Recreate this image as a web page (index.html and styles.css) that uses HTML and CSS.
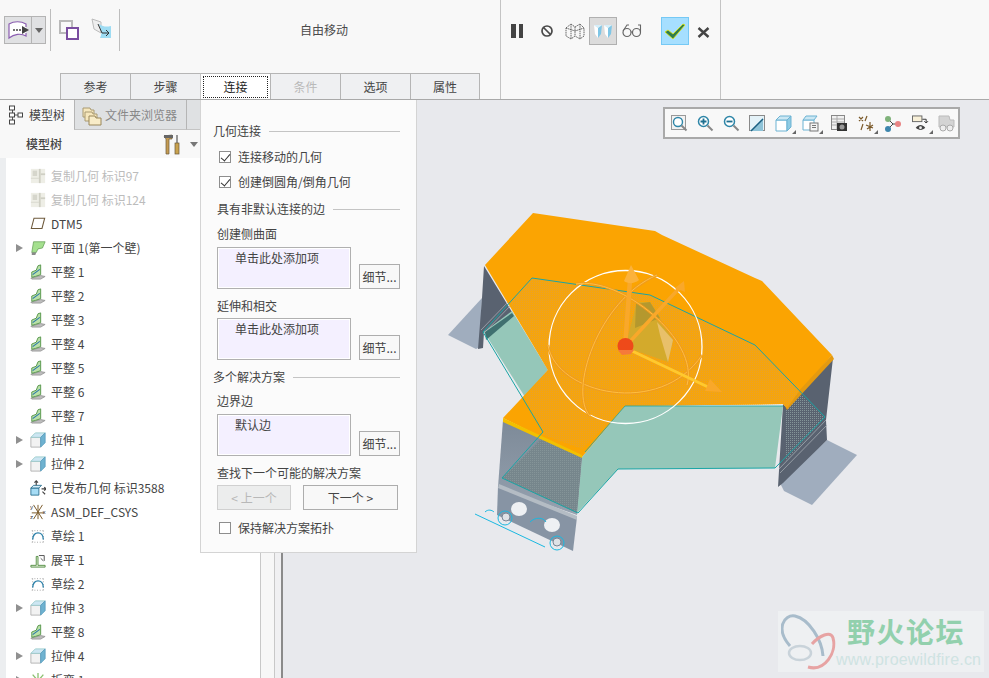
FILE: index.html
```html
<!DOCTYPE html>
<html lang="zh-CN">
<head>
<meta charset="utf-8">
<title>自由移动</title>
<link rel="stylesheet" href="styles.css">
</head>
<body>
<svg class="defs" width="0" height="0" aria-hidden="true">
  <defs>
    <symbol id="i-copy" viewBox="0 0 18 18"><rect x="1" y="1" width="16" height="16" fill="#eeeee6"/><rect x="3" y="3" width="5" height="6" fill="#d6d6cc"/><rect x="10" y="1" width="2" height="16" fill="#cfcfc4"/><rect x="12" y="6" width="5" height="2" fill="#cfcfc4"/><rect x="1" y="11" width="9" height="1" fill="#d6d6cc"/></symbol>
    <symbol id="i-plane" viewBox="0 0 18 18"><path d="M4.500 2.500H16.500L13.500 14H1.500Z" fill="#fff" stroke="#6e5a3c" stroke-width="1.200"/></symbol>
    <symbol id="i-wall" viewBox="0 0 18 18"><path d="M4 2H17L14 9 9 10 7 14H2Z" fill="#a5e08f" stroke="#5e9a50" stroke-width=".8"/><path d="M2 14H7L6 17H2Z" fill="#8a8a8a"/></symbol>
    <symbol id="i-flat" viewBox="0 0 18 18"><path d="M1 16 12 13 17 14 12 17H2Z" fill="#bdbdbd" stroke="#8a8a8a" stroke-width=".8"/><path d="M2 15V9L7 7 9 2 12 1V12L6 14Z" fill="#b9e0a8" stroke="#4f9044"/><path d="M3 12 11 6" stroke="#2a78a8" stroke-width="1.200"/></symbol>
    <symbol id="i-ext" viewBox="0 0 18 18"><path d="M1 6H12V17H1Z" fill="#f2f2f2" stroke="#b0b0b0"/><path d="M1 6 6 1H17L12 6Z" fill="#cde6f2" stroke="#9cc"/><path d="M12 6 17 1V12L12 17Z" fill="#6fb2d0" stroke="#5a9fc0"/></symbol>
    <symbol id="i-pub" viewBox="0 0 18 18"><path d="M1 9H10V17H1Z" fill="#a6dcf5" stroke="#2a6f8f"/><path d="M1 9 4 6H13L10 9Z" fill="#d7effa" stroke="#2a6f8f"/><path d="M7 6V1M5 3 7 1 9 3M13 10H18M16 8 18 10 16 12M14 13 17 16" fill="none" stroke="#444" stroke-width="1.300"/></symbol>
    <symbol id="i-csys" viewBox="0 0 18 18"><path d="M4 1 14 17M14 1 4 17M9 1V17M2 10H16" stroke="#7b5a2a" stroke-width="1.100" fill="none"/><text x="0" y="6" class="tiny">y</text><text x="0" y="17" class="tiny">z</text><text x="14" y="11" class="tiny">x</text></symbol>
    <symbol id="i-sk" viewBox="0 0 18 18"><path d="M2 3H16M2 16H16M3 3V16M15 3V16" stroke="#9a9a9a" stroke-dasharray="1 2" fill="none"/><path d="M3 13C3 3 15 3 15 13" stroke="#2a7fa8" stroke-width="1.600" fill="none"/></symbol>
    <symbol id="i-unf" viewBox="0 0 18 18"><path d="M1 15H7V5H9V15H17V17H1Z" fill="#e6f0dc" stroke="#4d8a3c"/><path d="M10 4 16 4V10M12 7 15 10" stroke="#444" fill="none"/></symbol>
    <symbol id="i-bend" viewBox="0 0 18 18"><path d="M9 10 3 3M9 10V1M9 10 15 3M1 9 17 9" stroke="#8cc070" stroke-width="1.500" fill="none"/></symbol>
  </defs>
</svg>

<header class="ribbon">
  <div class="group group-main">
    <div class="tools">
      <div class="split">
        <span class="split-main">
          <svg width="23" height="19" viewBox="0 0 23 19"><path d="M2 3C7 0 14 0 19 3V15C14 12 7 13 2 17Z" fill="#fff"/><path d="M19 6V3C14 0 7 0 2 3V17C7 13 14 12 19 15V12" fill="none" stroke="#8a5db0" stroke-width="1.200"/><path d="M6 9H16" stroke="#444" stroke-width="1.500" stroke-dasharray="2 1"/><path d="M15 5 22 9 15 13Z" fill="#444"/></svg>
        </span>
        <span class="split-arrow"></span>
      </div>
      <div class="sep"></div>
      <svg class="tool-a" width="21" height="21" viewBox="0 0 21 21"><rect x="1" y="1" width="12" height="12" fill="none" stroke="#b9b9b9" stroke-width="2"/><rect x="8" y="8" width="11" height="11" fill="#fff" stroke="#7a4da0" stroke-width="2"/></svg>
      <svg class="tool-b" width="21" height="21" viewBox="0 0 21 21"><path d="M1 1 10 4V15L3 11Z" fill="#eee" stroke="#bbb"/><path d="M8 6C13 9 15 9 20 8V20H9C12 14 9 10 8 6Z" fill="#9edcf3"/><path d="M7 6 11 15H18M15 12 18 15 15 18" fill="none" stroke="#333"/></svg>
      <div class="sep sep-b"></div>
      <div class="title">自由移动</div>
    </div>
    <nav class="tabs">
      <span class="tab">参考</span>
      <span class="tab">步骤</span>
      <span class="tab tab-on"><span class="focus">连接</span></span>
      <span class="tab tab-off">条件</span>
      <span class="tab">选项</span>
      <span class="tab">属性</span>
    </nav>
  </div>
  <div class="group group-act">
    <span class="act act-pause"><i></i><i></i></span>
    <span class="act"><svg width="14" height="14" viewBox="0 0 14 14"><circle cx="7" cy="7" r="5" fill="none" stroke="#4a4a4a" stroke-width="1.700"/><path d="M3.500 3.500 10.500 10.500" stroke="#4a4a4a" stroke-width="1.700"/></svg></span>
    <span class="act"><svg width="20" height="18" viewBox="0 0 20 18"><path d="M1 6 6 2 10 5 15 2 19 6V14L15 17 10 14 6 17 1 14ZM6 2V17M15 2V17M10 5V14M1 6 10 9 19 6" fill="none" stroke="#555" stroke-width=".9" stroke-dasharray="1.500 .7"/></svg></span>
    <span class="act act-sel"><svg width="20" height="16" viewBox="0 0 20 16"><path d="M1 2 5 5V15L2 11Z" fill="#fff"/><path d="M9 2 5 5V15L8 11Z" fill="#7fc6e6"/><path d="M1 2H9L5 5Z" fill="#d6effa"/><path d="M11 2 15 5V15L12 11Z" fill="#fff"/><path d="M19 2 15 5V15L18 11Z" fill="#7fc6e6"/><path d="M11 2H19L15 5Z" fill="#d6effa"/></svg></span>
    <span class="act"><svg width="20" height="14" viewBox="0 0 20 14"><circle cx="5" cy="8.500" r="4" fill="none" stroke="#666" stroke-width="1.200"/><circle cx="14.500" cy="8.500" r="4" fill="none" stroke="#666" stroke-width="1.200"/><path d="M9 8H10.500M1 7 5 1H7M18.500 8V1H16" fill="none" stroke="#666" stroke-width="1.100"/></svg></span>
    <span class="act act-ok"><svg width="22" height="17" viewBox="0 0 22 17"><path d="M1 9 4 7 9 11 19 1 21 2 9 16Z" fill="#2e7d4f" stroke="#e8e800" stroke-width=".8"/></svg></span>
    <span class="act act-x"><svg width="13" height="11" viewBox="0 0 13 11"><path d="M1.500 1 11.500 10M11.500 1 1.500 10" stroke="#444" stroke-width="2.400"/></svg></span>
  </div>
  <div class="group-rest"></div>
</header>

<main class="main">
  <aside class="side">
    <div class="side-tabs">
      <span class="stab stab-on">
        <svg width="18" height="20" viewBox="0 0 18 20"><path d="M4.500 5V16M4.500 10H10" stroke="#555"/><rect x="1.500" y="1" width="5" height="4" fill="#fff" stroke="#444"/><rect x="1.500" y="8" width="5" height="4" fill="#fff" stroke="#444"/><rect x="1.500" y="15" width="5" height="4" fill="#fff" stroke="#444"/><rect x="10" y="8" width="4.500" height="4" fill="#fff" stroke="#444"/></svg>
        模型树
      </span>
      <span class="stab">
        <svg width="20" height="20" viewBox="0 0 20 20"><path d="M1 2H8L9 4H12V11H1Z" fill="#f6e7bd" stroke="#a99a72"/><path d="M3 6H10L11 8H15V15H3Z" fill="#f6e7bd" stroke="#a99a72"/><path d="M7 10H13L14 12H19V19H7Z" fill="#f8ecc8" stroke="#9a875a"/></svg>
        文件夹浏览器
      </span>
      <span class="stab stab-c"></span>
    </div>
    <div class="side-head">
      <b class="side-title">模型树</b>
      <svg width="18" height="21" viewBox="0 0 18 21"><path d="M1 2 9 1V5H6V20H3V5Z" fill="#c59b52" stroke="#6a5a3a" stroke-width=".7"/><path d="M1 1H10V4H1Z" fill="#666"/><path d="M14 1V9" stroke="#777" stroke-width="1.500"/><rect x="12" y="9" width="4" height="11" fill="#c9a24e" stroke="#6a5a3a" stroke-width=".7"/></svg>
      <span class="caret"></span>
    </div>
    <ul class="tree">
      <li class="row dim"><svg class="ic"><use href="#i-copy"/></svg>复制几何 标识97</li>
      <li class="row dim"><svg class="ic"><use href="#i-copy"/></svg>复制几何 标识124</li>
      <li class="row"><svg class="ic"><use href="#i-plane"/></svg>DTM5</li>
      <li class="row more"><svg class="ic"><use href="#i-wall"/></svg>平面 1(第一个壁)</li>
      <li class="row"><svg class="ic"><use href="#i-flat"/></svg>平整 1</li>
      <li class="row"><svg class="ic"><use href="#i-flat"/></svg>平整 2</li>
      <li class="row"><svg class="ic"><use href="#i-flat"/></svg>平整 3</li>
      <li class="row"><svg class="ic"><use href="#i-flat"/></svg>平整 4</li>
      <li class="row"><svg class="ic"><use href="#i-flat"/></svg>平整 5</li>
      <li class="row"><svg class="ic"><use href="#i-flat"/></svg>平整 6</li>
      <li class="row"><svg class="ic"><use href="#i-flat"/></svg>平整 7</li>
      <li class="row more"><svg class="ic"><use href="#i-ext"/></svg>拉伸 1</li>
      <li class="row more"><svg class="ic"><use href="#i-ext"/></svg>拉伸 2</li>
      <li class="row"><svg class="ic"><use href="#i-pub"/></svg>已发布几何 标识3588</li>
      <li class="row"><svg class="ic"><use href="#i-csys"/></svg>ASM_DEF_CSYS</li>
      <li class="row"><svg class="ic"><use href="#i-sk"/></svg>草绘 1</li>
      <li class="row"><svg class="ic"><use href="#i-unf"/></svg>展平 1</li>
      <li class="row"><svg class="ic"><use href="#i-sk"/></svg>草绘 2</li>
      <li class="row more"><svg class="ic"><use href="#i-ext"/></svg>拉伸 3</li>
      <li class="row"><svg class="ic"><use href="#i-flat"/></svg>平整 8</li>
      <li class="row more"><svg class="ic"><use href="#i-ext"/></svg>拉伸 4</li>
      <li class="row more"><svg class="ic"><use href="#i-bend"/></svg>折弯 1</li>
    </ul>
  </aside>
  <div class="gutter"></div>
  <div class="gutter-b"></div>

  <section class="view">
    <svg class="model" viewBox="283 100 706 578" width="706" height="578">
      <defs>
        <pattern id="dots" width="2" height="2" patternUnits="userSpaceOnUse"><rect width="1" height="1" fill="#e8a02c"/></pattern>
        <pattern id="dotsg" width="2" height="2" patternUnits="userSpaceOnUse"><rect width="1" height="1" fill="#849498"/></pattern>
        <linearGradient id="fw" x1="0" y1="0" x2="0" y2="1"><stop offset="0" stop-color="#7d8a98"/><stop offset="1" stop-color="#95a1af"/></linearGradient>
      </defs>
      <!-- flanges -->
      <path d="M448 335 482 298 480 347 476 349Z" fill="#a0adbe"/>
      <path d="M780 483 827 440 857 455 812 505 784 491Z" fill="#a0adbe"/>
      <!-- dark walls -->
      <path d="M484 266 512 312 484 332 483 348 478 349 482 298Z" fill="#596270"/>
      <path d="M833 358 826 420 827 440 783 483 778 487 783 404 787 408Z" fill="#596270"/>
      <path d="M799 392 825 417 785 462 786 410Z" fill="url(#dotsg)"/>
      <path d="M779 469 826 420M780 473 827 425" fill="none" stroke="#a4acb2" stroke-width=".8"/>
      <!-- front wall -->
      <path d="M503 420 582 457 577 515 498 487Z" fill="url(#fw)"/>
      <path d="M498 486 577 517 573 551 497 515Z" fill="#8794a4"/>
      <path d="M499 484 577 516 577 520 498 488Z" fill="#b4bcc4"/>
      <ellipse cx="519" cy="509" rx="8" ry="7" fill="#eef0f3"/>
      <ellipse cx="552" cy="525" rx="8" ry="7" fill="#eef0f3"/>
      <ellipse cx="506" cy="517" rx="4" ry="4" fill="#dfe2e6" stroke="#7a8796"/>
      <ellipse cx="557" cy="542" rx="4" ry="4" fill="#dfe2e6" stroke="#7a8796"/>
      <!-- teal -->
      <path d="M625 406H783L775 468 618 469 577 513 582 457Z" fill="#95c7b9"/>
      <path d="M484 332 512 311 548 370 525 397Z" fill="#95c7b9"/>
      <path d="M485 332 512 313 514 316 486 340Z" fill="#3f7070"/>
      <path d="M481 330 510 300M483 334 512 304" fill="none" stroke="#a4acb2" stroke-width=".8"/>
      <path d="M543 437 582 457 577 513 502 478Z" fill="#76868c"/>
      <path d="M543 437 582 457 577 513 502 478Z" fill="url(#dotsg)"/>
      <!-- orange top -->
      <path d="M485 265 533 213 655 231 662 235 755 278 762 281 832 355 787 408 783 404 625 406 582 457 503 418 548 370Z" fill="#fba402"/>
      <path d="M503 418 582 455 582 458 503 422Z" fill="#f2c000"/>
      <path d="M832 355 834 359 787 410 785 406Z" fill="#e49a10"/>
      <path d="M510 303 532 278 650 295 755 345 800 390 787 408 783 404 625 406 582 449 543 435 525 397 548 370Z" fill="#f6a50c"/>
      <path d="M510 303 532 278 650 295 755 345 800 390 787 408 783 404 625 406 582 449 543 435 525 397 548 370Z" fill="url(#dots)"/>
      <!-- outline -->
      <path d="M483 332 532 278 650 295 755 345 825 417 775 468 618 469 578 513 502 478 543 432Z" fill="none" stroke="#1aa5a5" stroke-width="1"/>
      <path d="M585 452 625 406H783" fill="none" stroke="#1aa5a5" stroke-width=".8"/>
      <path d="M475 514 545 547" stroke="#1ab8e0" fill="none"/>
      <circle cx="505" cy="518" r="7" fill="none" stroke="#1ab8e0"/>
      <circle cx="557" cy="543" r="7" fill="none" stroke="#1ab8e0"/>
      <path d="M485 512C488 509 492 510 494 512M530 522C535 517 543 517 546 522" fill="none" stroke="#1ab8e0"/>
      <!-- gizmo -->
      <path d="M625 347 637 302 650 302 673 340 668 362Z" fill="#d3aa2c"/>
      <path d="M636 304 650 302 660 318 635 328Z" fill="#b4982e"/>
      <path d="M657 322 673 340 668 362 660 335Z" fill="#e8c06a"/>
      <circle cx="625.500" cy="347" r="76.500" fill="none" stroke="#fff" stroke-width="1.300"/>
      <path class="arc" d="M548 345C556 394 660 418 702 355"/>
      <path class="arc-lt" d="M548 345C556 394 660 418 702 355"/>
      <path class="arc" d="M590 416C568 392 598 300 657 275"/>
      <path class="arc-lt" d="M590 416C568 392 598 300 657 275"/>
      <path class="arc" d="M576 284C620 276 700 340 687 385"/>
      <path class="arc-lt" d="M576 284C620 276 700 340 687 385"/>
      <path d="M625 347 683 284" stroke="#f9a82a" stroke-width="3.500"/>
      <path d="M684 281 685 292 675 288Z" fill="#f9a82a"/>
      <path d="M625 347 630 280" stroke="#f9a82a" stroke-width="4.500"/>
      <path d="M631 265 639 280C634 284 628 284 624 281Z" fill="#fbb23c"/>
      <path d="M630 350 708 387" stroke="#ffc92e" stroke-width="3"/>
      <path d="M722 392 710 379 705 391Z" fill="#f9a82a"/>
      <circle cx="625.500" cy="346" r="8" fill="#ee4a1a"/>
      <path d="M618 350H634L631 354 622 355Z" fill="#f57a3a"/>
    </svg>

    <div class="vbar">
      <svg width="17" height="17" viewBox="0 0 17 17"><rect x=".5" y=".5" width="14" height="14" fill="#f2f2f2" stroke="#999"/><circle cx="7" cy="7" r="4.500" fill="#fff" stroke="#2e86a8" stroke-width="1.400"/><path d="M10.500 10.500 15.500 15.500" stroke="#888" stroke-width="2"/></svg>
      <svg width="17" height="17" viewBox="0 0 17 17"><circle cx="6.500" cy="6.500" r="5" fill="#fff" stroke="#2e86a8" stroke-width="1.500"/><path d="M3.500 6.500H9.500M6.500 3.500V9.500" stroke="#1e6f90" stroke-width="1.800"/><path d="M10.500 10.500 15.500 15.500" stroke="#888" stroke-width="2"/></svg>
      <svg width="17" height="17" viewBox="0 0 17 17"><circle cx="6.500" cy="6.500" r="5" fill="#fff" stroke="#2e86a8" stroke-width="1.500"/><path d="M3.500 6.500H9.500" stroke="#1e6f90" stroke-width="1.800"/><path d="M10.500 10.500 15.500 15.500" stroke="#888" stroke-width="2"/></svg>
      <svg width="17" height="17" viewBox="0 0 17 17"><rect x=".5" y=".5" width="15" height="15" fill="#e4f2f8" stroke="#8a8a8a"/><path d="M1 16 14 3V16Z" fill="#8ec3d8"/><path d="M2 16 14 4" stroke="#1c5f80" stroke-width="1.500"/></svg>
      <span class="vb-c"><svg width="17" height="17" viewBox="0 0 17 17"><path d="M1 5H12V16H1Z" fill="#fff" stroke="#6cb3d3"/><path d="M1 5 5 1H16L12 5Z" fill="#cbe7f3" stroke="#6cb3d3"/><path d="M12 5 16 1V12L12 16Z" fill="#8fcbe3" stroke="#6cb3d3"/></svg></span>
      <span class="vb-c vb-w1"><svg width="17" height="17" viewBox="0 0 17 17"><path d="M1 5H12V15H1Z" fill="#fff" stroke="#6cb3d3"/><path d="M1 5 4 1H15L12 5Z" fill="#cbe7f3" stroke="#6cb3d3"/><rect x="8" y="8" width="8" height="8" fill="#f4f4f4" stroke="#777"/><path d="M10 10.500H14M10 12.500H14" stroke="#777"/></svg></span>
      <svg class="vb-w3" width="17" height="17" viewBox="0 0 17 17"><rect x=".5" y=".5" width="13" height="14" fill="#f0f0f0" stroke="#888"/><path d="M1 4H13M1 7H13M1 10H13M6 1V14" stroke="#aaa"/><rect x="6" y="8" width="10" height="8" fill="#333"/><circle cx="11" cy="12" r="2.500" fill="#999"/></svg>
      <span class="vb-c"><svg width="17" height="17" viewBox="0 0 17 17"><path d="M2 2 6 6M6 2 2 6M10 1 8 6M6 9 4 15M13 7V16M9 10 16 13M16 10 10 14" stroke="#7b5a2a" stroke-width="1.200" fill="none"/></svg></span>
      <svg class="vb-w1" width="17" height="17" viewBox="0 0 17 17"><path d="M4 4 9 9 4 14M9 9H14" stroke="#444" fill="none"/><circle cx="4" cy="4" r="3" fill="#7fb27a"/><circle cx="4" cy="14" r="3" fill="#3d86ad"/><circle cx="14" cy="9" r="3" fill="#e98484"/></svg>
      <span class="vb-c vb-w2"><svg width="17" height="17" viewBox="0 0 18 17"><rect x=".5" y=".5" width="10" height="6" fill="#f8f0d8" stroke="#666"/><path d="M11 4H15V8M13 6 15 8 17 6" stroke="#333" fill="none"/><path d="M4 13C7 9 11 9 14 13 11 16 7 16 4 13Z" fill="#444"/><circle cx="9" cy="13" r="1.500" fill="#eee"/></svg></span>
      <svg width="17" height="17" viewBox="0 0 17 17"><path d="M1 1H11L12 5H16V12H1Z" fill="#d4d4d4" stroke="#bbb"/><circle cx="5" cy="13" r="3" fill="#eee" stroke="#aaa"/><circle cx="12" cy="13" r="3" fill="#eee" stroke="#aaa"/></svg>
    </div>

    <aside class="mark">
      <svg class="mark-logo" width="57" height="56" viewBox="0 0 57 56" fill="none"><path d="M9 32C-6 15 3 0 14 2 28 5 41 26 42 42" stroke="#a8bccb" stroke-width="3"/><ellipse cx="19" cy="39" rx="11" ry="7" stroke="#c9d3da" stroke-width="2.500"/><path d="M27 53C44 58 56 38 52 24 50 16 38 22 31 30" stroke="#e7a3a3" stroke-width="3"/></svg>
      <div class="mark-text">
        <b class="mark-cn">野火论坛</b>
        <span class="mark-url">www.proewildfire.cn</span>
      </div>
    </aside>
  </section>

  <div class="pop">
    <div class="sec sec-first"><span>几何连接</span><hr></div>
    <label class="chk"><span class="box on"></span>连接移动的几何</label>
    <label class="chk"><span class="box on"></span>创建倒圆角/倒角几何</label>
    <div class="sec sec-in"><span>具有非默认连接的边</span><hr></div>
    <div class="lbl">创建侧曲面</div>
    <div class="pick"><div class="well">单击此处添加项</div><span class="btn">细节...</span></div>
    <div class="lbl">延伸和相交</div>
    <div class="pick pick-b"><div class="well">单击此处添加项</div><span class="btn">细节...</span></div>
    <div class="sec sec-c"><span>多个解决方案</span><hr></div>
    <div class="lbl lbl-c">边界边</div>
    <div class="pick"><div class="well">默认边</div><span class="btn">细节...</span></div>
    <div class="lbl lbl-d">查找下一个可能的解决方案</div>
    <div class="nav"><span class="nbtn prev">&lt; 上一个</span><span class="nbtn next">下一个 &gt;</span></div>
    <label class="chk chk-last"><span class="box"></span>保持解决方案拓扑</label>
  </div>
</main>
</body>
</html>
```

FILE: styles.css
```css
* { box-sizing: border-box; }
html, body { margin: 0; padding: 0; }
body {
  width: 989px;
  height: 678px;
  overflow: hidden;
  background: #e8e9ed;
  color: #444;
  font: 12px/16px "Noto Sans CJK SC", "Noto Sans", sans-serif;
  position: relative;
}
.defs { position: absolute; }
.tiny { font: 7px "Liberation Sans", sans-serif; fill: #333; }

/* ribbon */
.ribbon {
  display: flex;
  height: 100px;
  background: #f8f8f8;
  border-bottom: 1px solid #a9a9a9;
}
.group-main {
  width: 501px;
  border-right: 1px solid #c4c4c4;
  display: flex;
  flex-direction: column;
  justify-content: space-between;
}
.tools {
  display: flex;
  align-items: flex-start;
  padding: 9px 0 0 4px;
  height: 60px;
}
.split {
  display: flex;
  width: 42px;
  height: 28px;
  margin-top: 7px;
  background: #e0e1e3;
  border: 1px solid #b4b4b4;
}
.split-main {
  width: 27px;
  display: flex;
  align-items: center;
  justify-content: center;
  border-right: 1px solid #b4b4b4;
}
.split-arrow { flex: 1; position: relative; }
.split-arrow::after {
  content: "";
  position: absolute;
  left: 3px;
  top: 11px;
  border: 4px solid transparent;
  border-top: 5px solid #666;
  border-bottom: 0;
}
.sep { width: 1px; height: 42px; background: #bdbdbd; margin: 0 0 0 4px; }
.tool-a { margin: 11px 0 0 8px; }
.tool-b { margin: 9px 0 0 11px; }
.sep-b { margin-left: 7px; }
.title { flex: none; margin: 13px 0 0 180px; color: #4a4a4a; }
.tabs { display: flex; padding-left: 60px; height: 26px; }
.tab {
  width: 70px;
  display: flex;
  align-items: center;
  justify-content: center;
  background: #eff0f2;
  border: 1px solid #b5b5b5;
  border-bottom: 0;
  border-right: 0;
}
.tab:last-child { border-right: 1px solid #b5b5b5; }
.tab-on { background: #fff; padding: 2px 2px 1px; border-left-color: #c8c8c8; }
.focus {
  width: 100%;
  height: 100%;
  display: flex;
  align-items: center;
  justify-content: center;
  border: 1px dotted #222;
  color: #222;
}
.tab-off { color: #b9b9b9; }
.group-act {
  width: 220px;
  border-right: 1px solid #c4c4c4;
  display: flex;
  align-items: flex-start;
  padding: 17px 0 0 2px;
}
.group-rest { flex: 1; }
.act {
  flex: none;
  width: 28px;
  height: 28px;
  display: flex;
  align-items: center;
  justify-content: center;
}
.act-pause { gap: 3px; margin-right: 2px; }
.act-pause i { width: 4.500px; height: 14px; background: #444; }
.act-sel { background: #dcdcdc; border: 1px solid #b0b0b0; margin-right: 1px; }
.act-ok { background: #a6dfff; border: 1px solid #75c9f5; margin-left: 15px; }
.act-x { margin-top: 1px; }

/* main */
.main { display: flex; height: 578px; position: relative; }
.side { width: 261px; display: flex; flex-direction: column; border-right: 1px solid #c8c8c8; background: #fff; }
.side-tabs { display: flex; height: 30px; background: #dfe1e3; }
.stab {
  display: flex;
  align-items: center;
  gap: 4px;
  padding-left: 30px;
  width: 112px;
  border-left: 1px solid #b5b5b5;
  border-bottom: 1px solid #c4c4c4;
  color: #888;
  position: relative;
}
.stab svg { position: absolute; left: 7px; top: 6px; }
.stab-on { width: 74px; background: #f8f8f8; color: #444; border-left: 0; border-bottom: 0; border-right: 0; padding-left: 29px; }
.stab-on svg { left: 8px; top: 5px; }
.stab-c { flex: 1; }
.side-head {
  height: 28px;
  background: #f8f8f8;
  display: flex;
  align-items: center;
  padding-left: 26px;
  position: relative;
}
.side-title { font-weight: 500; flex: 0 0 137px; }
.caret { border: 4px solid transparent; border-top: 5px solid #777; border-bottom: 0; margin-left: 9px; }
.tree {
  list-style: none;
  margin: 0 0 0 6px;
  padding: 6px 0 0;
  flex: 1;
  overflow: hidden;
  background: #fff;
  box-shadow: -6px 0 0 #eceef0;
}
.row {
  height: 24px;
  display: flex;
  align-items: center;
  padding-left: 24px;
  gap: 5px;
  position: relative;
  white-space: nowrap;
}
.ic { width: 16px; height: 16px; flex: none; }
.dim { color: #bcbcbc; }
.more::before {
  content: "";
  position: absolute;
  left: 10px;
  top: 8px;
  border: 4px solid transparent;
  border-left: 7px solid #909090;
  border-right: 0;
}
.gutter { width: 14px; background: #f7f7f7; border-right: 1px solid #c8c8c8; }
.gutter-b { width: 8px; background: #f0f0f2; border-right: 2px solid #8a8a8a; }

/* viewport */
.view { flex: 1; position: relative; overflow: hidden; background: #e8e9ed; }
.model { position: absolute; left: 0; top: 0; }
.arc { fill: none; stroke: #ee9a20; stroke-width: 2.600; }
.arc-lt { fill: none; stroke: #ffc040; stroke-width: 1; }
.vbar {
  position: absolute;
  left: 380px;
  top: 7px;
  width: 297px;
  height: 32px;
  background: #f8f8f8;
  border: 2px solid #a9a9a9;
  display: flex;
  align-items: center;
  gap: 9px;
  padding: 0 0 0 6px;
}
.vbar > * { flex: none; }
.vb-w1 { margin-left: 1px; }
.vb-w2 { margin-left: 2px; }
.vb-w3 { margin-left: 3px; }
.vb-c { display: flex; position: relative; }
.vb-c::after {
  content: "";
  position: absolute;
  right: -4px;
  bottom: -2px;
  border: 2px solid #666;
  border-left-color: transparent;
  border-top-color: transparent;
}
.mark {
  position: absolute;
  left: 495px;
  top: 511px;
  width: 206px;
  height: 61px;
  background: #eef0f2;
  display: flex;
  padding: 3px 0 0 3px;
}
.mark-logo { flex: none; }
.mark-text { display: flex; flex-direction: column; margin-left: 7px; }
.mark-cn { font-size: 28px; line-height: 35px; letter-spacing: 1.500px; color: #92d0ad; font-weight: 700; margin-left: 2px; white-space: nowrap; }
.mark-url { font: 16px/22px "Liberation Sans", sans-serif; letter-spacing: .2px; color: #cfe3e2; margin-left: -9px; white-space: nowrap; }

/* popover */
.pop {
  position: absolute;
  left: 200px;
  top: 0;
  width: 217px;
  height: 453px;
  background: #fbfbfb;
  border: 1px solid #d4d4d4;
  border-top: 0;
  padding: 23px 16px 0 16px;
}
.sec { display: flex; align-items: center; gap: 8px; height: 16px; margin-left: -4px; }
.sec hr { flex: 1; height: 1px; margin: 0; border: 0; background: #c4c4c4; }
.sec span { white-space: nowrap; }
.sec-in { margin: 11px 0 0 0; }
.sec-c { margin-top: 9px; }
.chk { display: flex; align-items: center; gap: 7px; height: 16px; margin: 9px 0 0 2px; }
.chk:first-of-type { margin-top: 10px; }
.box { width: 12px; height: 12px; border: 1px solid #8e8e8e; background: #fff; position: relative; flex: none; }
.box.on::after {
  content: "";
  position: absolute;
  left: 3px;
  top: 0;
  width: 4px;
  height: 8px;
  border: solid #333;
  border-width: 0 1.500px 1.500px 0;
  transform: rotate(40deg);
}
.lbl { margin-top: 9px; height: 16px; }
.lbl-c { margin-top: 8px; }
.lbl-d { margin-top: 9px; }
.pick { display: flex; align-items: flex-end; justify-content: space-between; margin-top: 5px; }
.pick-b { margin-top: 4px; }
.well {
  width: 134px;
  height: 42px;
  background: #f4f0ff;
  border: 1px solid #b0b0b0;
  box-shadow: inset 0 0 0 1px #fff;
  padding: 2px 0 0 17px;
}
.btn {
  width: 41px;
  height: 25px;
  background: #f8f8f8;
  border: 1px solid #adadad;
  display: flex;
  align-items: center;
  justify-content: center;
}
.nav { display: flex; justify-content: space-between; margin-top: 4px; width: 181px; }
.nbtn { height: 25px; display: flex; align-items: center; justify-content: center; border: 1px solid #adadad; background: #f8f8f8; }
.prev { width: 74px; color: #b8b8b8; background: #eceded; border-color: #d0d0d0; }
.next { width: 95px; }
.chk-last { margin-top: 10px; }
```
